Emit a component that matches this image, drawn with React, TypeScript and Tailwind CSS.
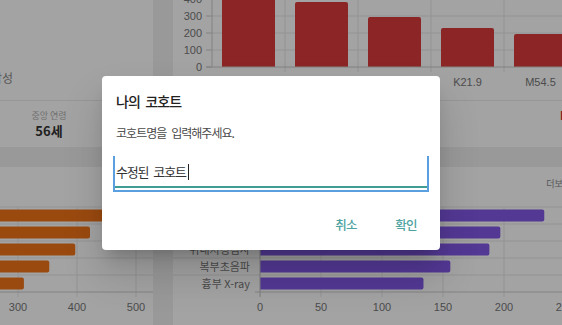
import React from "react";

const latin = '"Liberation Sans", "Noto Sans CJK KR", sans-serif';
const kr = '"Noto Sans CJK KR", "Liberation Sans", sans-serif';

const codeBars = [
  { code: "I10", value: 430 },
  { code: "E11.9", value: 382 },
  { code: "E78.5", value: 294 },
  { code: "K21.9", value: 229 },
  { code: "M54.5", value: 194 },
];

const examBars = [
  { name: "혈액검사", value: 233 },
  { name: "소변검사", value: 197 },
  { name: "위내시경검사", value: 188 },
  { name: "복부초음파", value: 156 },
  { name: "흉부 X-ray", value: 134 },
];

const drugBars = [470, 422, 397, 353, 310];

function CodeChart() {
  const base = 67;
  const k = 0.17;
  return (
    <svg width="417" height="100" className="block" style={{ fontFamily: latin }}>
      {[100, 200, 300, 400].map((v) => (
        <line key={v} x1={39} x2={417} y1={base - v * k} y2={base - v * k} stroke="#e6e6e6" />
      ))}
      {[1, 2, 3, 4, 5].map((i) => (
        <line key={i} x1={39 + 73 * i} x2={39 + 73 * i} y1={0} y2={72} stroke="#e6e6e6" />
      ))}
      {codeBars.map((b, i) => {
        const x = 49 + 73 * i;
        const top = base - b.value * k;
        return (
          <g key={b.code}>
            <path
              d={`M${x} ${base} V${top + 2} Q${x} ${top} ${x + 2} ${top} H${x + 51} Q${x + 53} ${top} ${x + 53} ${top + 2} V${base} Z`}
              fill="#dc3c3c"
            />
            <text x={39 + 36.5 + 73 * i} y={86} textAnchor="middle" fontSize="11" fill="#777">
              {b.code}
            </text>
          </g>
        );
      })}
      {[0, 100, 200, 300, 400].map((v) => (
        <g key={v}>
          <line x1={33} x2={39} y1={base - v * k} y2={base - v * k} stroke="#cccccc" />
          <text x={29} y={base - v * k + 4} textAnchor="end" fontSize="11" fill="#777">
            {v}
          </text>
        </g>
      ))}
      <line x1={39} x2={39} y1={0} y2={base} stroke="#cccccc" />
      <line x1={33} x2={417} y1={base} y2={base} stroke="#cccccc" />
    </svg>
  );
}

function HBarGrid({ width, xs }: { width: number; xs: number[] }) {
  return (
    <>
      {[40, 57, 74, 91, 108].map((y) => (
        <line key={y} x1={0} x2={width} y1={y} y2={y} stroke="#e6e6e6" />
      ))}
      {xs.map((x) => (
        <line key={x} x1={x} x2={x} y1={40} y2={130} stroke="#e6e6e6" />
      ))}
    </>
  );
}

function ExamChart() {
  const x0 = 87;
  const k = 1.22;
  return (
    <svg width="417" height="158" className="block" style={{ fontFamily: latin }}>
      <HBarGrid width={417} xs={[0, 1, 2, 3, 4, 5].map((i) => x0 + 61 * i)} />
      {examBars.map((b, i) => {
        const y = 40 + 17 * i + 2.5;
        const w = b.value * k;
        return (
          <g key={b.name}>
            <path
              d={`M${x0} ${y} H${x0 + w - 2} Q${x0 + w} ${y} ${x0 + w} ${y + 2} V${y + 10} Q${x0 + w} ${y + 12} ${x0 + w - 2} ${y + 12} H${x0} Z`}
              fill="#8358e8"
            />
            <text x={77} y={y + 10} textAnchor="end" fontSize="11" fill="#777" style={{ fontFamily: kr }}>
              {b.name}
            </text>
          </g>
        );
      })}
      <line x1={82} x2={417} y1={125} y2={125} stroke="#cccccc" />
      <line x1={x0} x2={x0} y1={40} y2={130} stroke="#cccccc" />
      {[0, 50, 100, 150, 200, 250].map((v, i) => (
        <text key={v} x={x0 + 61 * i} y={144} textAnchor="middle" fontSize="11" fill="#777">
          {v}
        </text>
      ))}
    </svg>
  );
}

function DrugChart() {
  const at = (v: number) => 18 + (v - 300) * 0.59;
  return (
    <svg width="153" height="158" className="block" style={{ fontFamily: latin }}>
      <HBarGrid width={153} xs={[at(300), at(400), at(500)]} />
      {drugBars.map((v, i) => {
        const y = 40 + 17 * i + 2.5;
        const e = at(v);
        return (
          <path
            key={i}
            d={`M-5 ${y} H${e - 2} Q${e} ${y} ${e} ${y + 2} V${y + 10} Q${e} ${y + 12} ${e - 2} ${y + 12} H-5 Z`}
            fill="#f27418"
          />
        );
      })}
      <line x1={0} x2={153} y1={125} y2={125} stroke="#cccccc" />
      {[300, 400, 500].map((v) => (
        <text key={v} x={at(v)} y={144} textAnchor="middle" fontSize="11" fill="#777">
          {v}
        </text>
      ))}
    </svg>
  );
}

function CohortDialog() {
  return (
    <div
      className="flex h-[174px] w-[338px] flex-col rounded-[4px] bg-white shadow-[0_11px_15px_-7px_rgba(0,0,0,0.2),0_24px_38px_3px_rgba(0,0,0,0.14)]"
      style={{ fontFamily: kr }}
    >
      <h2 className="px-[14px] pt-[14px] text-[14px] font-medium leading-[22px] tracking-[-0.06em] text-[#222] [word-spacing:0.2em]">
        나의 코호트
      </h2>
      <p className="mt-[12px] px-[14px] text-[12px] leading-[18px] tracking-[-0.08em] text-[#4a4a4a] [word-spacing:0.25em]">
        코호트명을 입력해주세요.
      </p>
      <div className="mx-[11px] mt-[14px] h-[36px] border-x-2 border-b-2 border-[#5a9fe0]">
        <div className="flex h-[32px] items-center border-b-2 border-[#3f9d96] pl-[1px] pt-[2px] text-[13px] tracking-[-0.09em] text-[#333] [word-spacing:0.25em]">
          수정된 코호트
          <span className="ml-[2px] inline-block h-[16px] w-px bg-[#222]" />
        </div>
      </div>
      <div className="mt-auto flex justify-end gap-1 pb-[6px] pr-[6px]">
        <button className="h-[36px] w-[56px] text-[12.5px] font-medium tracking-[-0.06em] text-[#4fa3a1]">취소</button>
        <button className="h-[36px] w-[56px] text-[12.5px] font-medium tracking-[-0.06em] text-[#4fa3a1]">확인</button>
      </div>
    </div>
  );
}

export default function App() {
  return (
    <div className="relative h-[325px] w-[562px] overflow-hidden bg-[#f0f0f0]" style={{ fontFamily: kr }}>
      <div className="grid h-[345px] w-[590px] grid-cols-[153px_1fr] grid-rows-[147px_1fr] gap-5">
        <div className="flex flex-col overflow-hidden bg-white">
          <div className="flex flex-1 items-end pb-[13px]">
            <span className="-ml-[9px] text-[12px] text-[#8a8a8a]">남성</span>
          </div>
          <div className="h-[47px] border-t border-[#ebebeb]">
            <div className="flex w-[98px] flex-col items-center pt-[9px]">
              <span className="text-[9px] leading-[12px] text-[#b0b0b0]">중앙 연령</span>
              <span className="mt-[1px] text-[13px] font-bold leading-[16px] text-[#333]">56세</span>
            </div>
          </div>
        </div>

        <div className="flex flex-col overflow-hidden bg-white">
          <CodeChart />
          <div className="flex-1 whitespace-nowrap border-t border-[#ebebeb] pl-[387px] pt-[8px] text-[11px] font-bold leading-[13px] text-[#d32f2f]">
            I10 본태성 고혈압
          </div>
        </div>

        <div className="overflow-hidden bg-white">
          <DrugChart />
        </div>

        <div className="relative overflow-hidden bg-white">
          <div className="absolute right-[19px] top-[10px] text-[9px] text-[#888]">더보기</div>
          <ExamChart />
        </div>
      </div>

      <div className="absolute inset-0 flex items-center justify-center bg-black/[0.36] pr-5">
        <CohortDialog />
      </div>
    </div>
  );
}
